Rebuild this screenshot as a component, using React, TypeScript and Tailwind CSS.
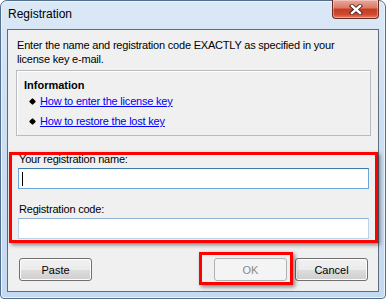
const font = "font-['Liberation_Sans',Arial,sans-serif]";

const Button = ({ label, disabled }: { label: string; disabled?: boolean }) => (
  <div
    className={
      "w-[73px] h-[23px] rounded-[3px] border flex items-center justify-center text-[11px] tracking-normal " +
      (disabled
        ? "border-[#adb2b5] bg-[#f4f4f4] text-[#8a8a8a]"
        : "border-[#707070] bg-[linear-gradient(#f2f2f2_0%,#ebebeb_50%,#dddddd_51%,#cfcfcf_100%)] text-black shadow-[inset_0_0_0_1px_#fcfcfc]")
    }
  >
    {label}
  </div>
);

export default function App() {
  return (
    <div className={`w-[386px] h-[299px] bg-white ${font}`}>
      <div className="w-full h-full flex flex-col rounded-t-[7px] rounded-b-[4px] border border-[#54708f] bg-[linear-gradient(#dbe8f6_0%,#cddff3_40%,#c5d9f0_100%)] shadow-[inset_0_0_0_1px_#e9f1fa]">
        {/* title bar */}
        <div className="h-[28px] flex items-start justify-between">
          <div className="pl-[7px] pt-[5px] text-[12px] leading-[16px] text-black">Registration</div>
          <div className="-mt-[1px] mr-[6px] w-[47px] h-[19px] rounded-b-[4px] border border-[#6b2a22] border-t-0 bg-[linear-gradient(#eaa79a_0%,#dc7a64_45%,#c63a24_50%,#cf4a31_80%,#df8266_100%)] shadow-[inset_0_0_0_1px_rgba(255,255,255,0.35)] flex items-center justify-center">
            <svg width="14" height="11" viewBox="0 0 14 11">
              <path d="M3 2 L11 9 M11 2 L3 9" stroke="#4a1e18" strokeWidth="4.2" strokeLinecap="square" />
              <path d="M3 2 L11 9 M11 2 L3 9" stroke="#ffffff" strokeWidth="2.4" strokeLinecap="square" />
            </svg>
          </div>
        </div>

        {/* client area */}
        <div className="relative mx-[6px] mb-[6px] flex-1 flex flex-col border border-[#5f6b7a] bg-[#f0f0f0] text-[11px] leading-[14px] tracking-[-0.2px] text-black">
          <p className="mt-[8px] ml-[9px]">
            Enter the name and registration code EXACTLY as specified in your
            <br />
            license key e-mail.
          </p>

          <div className="mt-[4px] ml-[8px] w-[355px] h-[66px] border border-[#b7bcc1] shadow-[inset_1px_1px_0_#ffffff] pl-[7px] pt-[7px]">
            <div className="font-bold tracking-normal">Information</div>
            <ul className="ml-[6px] mt-[2px] flex flex-col gap-[6px]">
              {["How to enter the license key", "How to restore the lost key"].map((t) => (
                <li key={t} className="flex items-center">
                  <span className="w-[5px] h-[5px] bg-black rounded-[1px] rotate-45 mr-[5px]" />
                  <span className="text-[#0000ff] underline">{t}</span>
                </li>
              ))}
            </ul>
          </div>

          <div className="mt-[16px] ml-[1px] w-[369px] h-[91px] border-[3px] border-[#ff0000] shadow-[2px_2px_4px_rgba(0,0,0,0.45)] px-[6px] pb-[1px] flex flex-col">
            <div className="-mt-[3px] pl-[1px]">Your registration name:</div>
            <div className="mt-[2px] h-[21px] border border-[#6fa6d6] border-t-[#3d7bad] bg-white flex items-center pl-[3px]">
              <span className="w-[1px] h-[14px] bg-black" />
            </div>
            <div className="mt-[13px] pl-[1px]">Registration code:</div>
            <div className="mt-[2px] h-[21px] border border-[#b9d3ea] border-t-[#8fb4d6] bg-white" />
          </div>

          <div className="mt-[15px] flex items-start pl-[11px] pr-[10px]">
            <Button label="Paste" />
            <div className="ml-auto">
              <Button label="OK" disabled />
            </div>
            <div className="ml-[8px]">
              <Button label="Cancel" />
            </div>
          </div>

          {/* annotation around OK */}
          <div className="absolute left-[191px] top-[222px] w-[94px] h-[33px] border-[3px] border-[#ff0000] shadow-[2px_2px_4px_rgba(0,0,0,0.45)]" />
        </div>
      </div>
    </div>
  );
}
